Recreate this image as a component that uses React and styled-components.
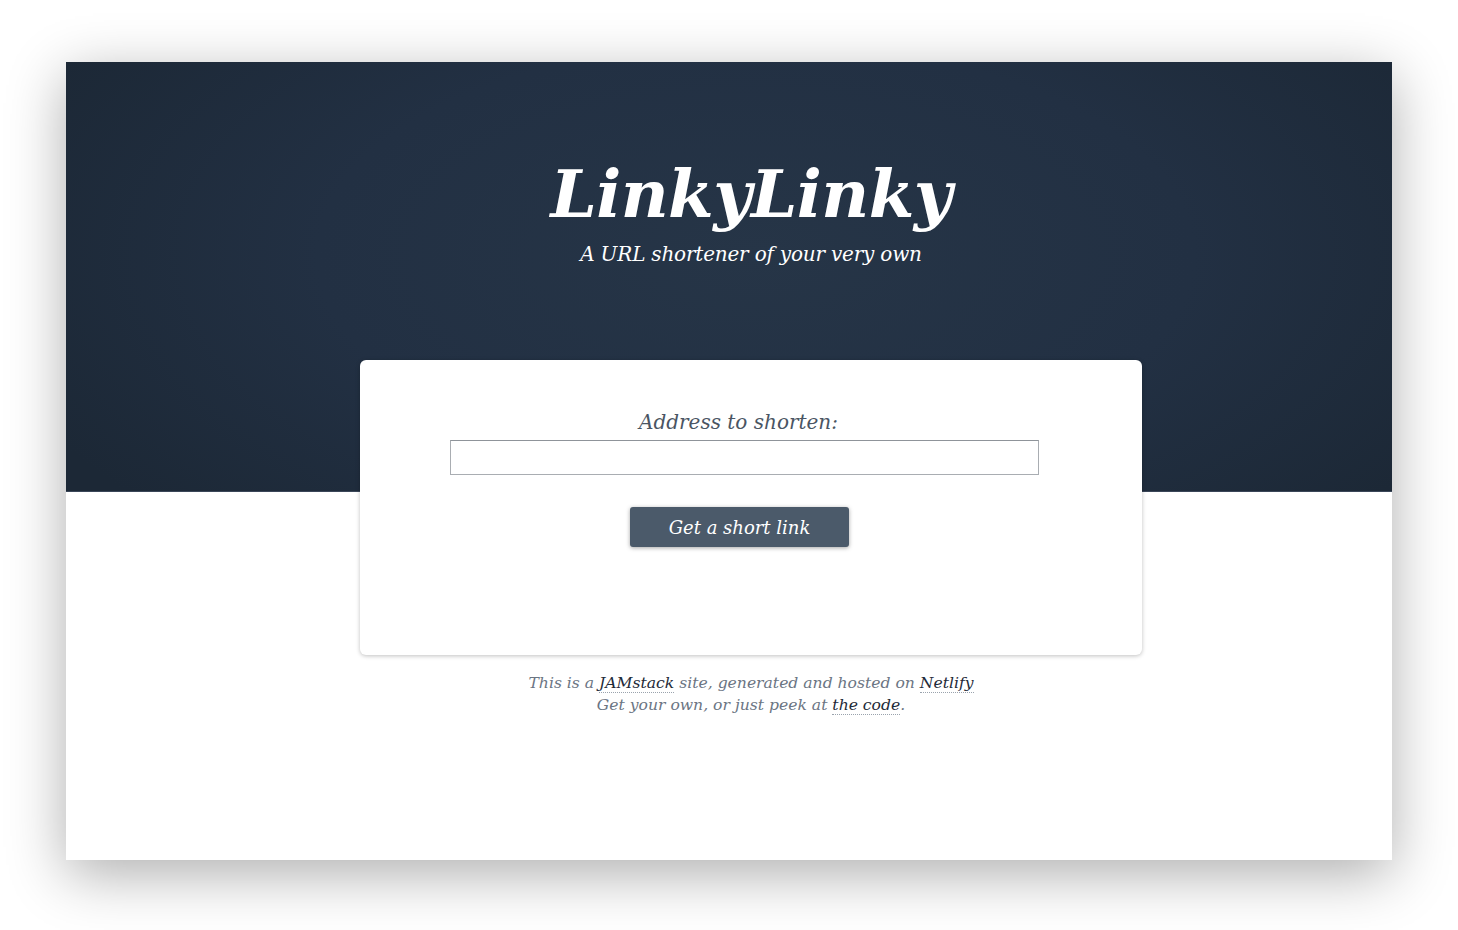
import React, {useState} from "react";
import styled, {createGlobalStyle} from 'styled-components';

const GlobalStyle = createGlobalStyle`
  html, body {
    margin: 0;
    padding: 0;
    background: #ffffff;
  }
  body {
    font-family: "DejaVu Serif", Georgia, serif;
  }
`;

const StyledPage = styled.div`
  width: 1458px;
  height: 930px;
  padding: 62px 66px 70px 66px;
  box-sizing: border-box;
  background: #ffffff;
`;

const StyledWindow = styled.div`
  width: 1326px;
  height: 798px;
  background: #ffffff;
  box-shadow: 0 14px 55px rgba(0, 0, 0, 0.32);
  overflow: hidden;
`;

const StyledHeader = styled.header`
  height: 430px;
  box-sizing: border-box;
  padding-top: 92px;
  padding-left: 294px;
  background: radial-gradient(ellipse 60% 90% at 52% 45%, #263547 0%, #223043 55%, #1c2836 100%);
  border-bottom: 1px solid #3a4658;
`;

const StyledColumn = styled.div`
  width: 782px;
  display: flex;
  flex-direction: column;
  align-items: center;
`;

const StyledTitle = styled.h1`
  margin: 0;
  font-family: "DejaVu Serif", Georgia, serif;
  font-style: italic;
  font-weight: bold;
  font-size: 66px;
  line-height: 80px;
  letter-spacing: -0.6px;
  color: #ffffff;
`;

const StyledSubtitle = styled.p`
  margin: 5px 0 0 0;
  font-family: "DejaVu Serif", Georgia, serif;
  font-style: italic;
  font-size: 20px;
  line-height: 30px;
  letter-spacing: -0.2px;
  color: #ffffff;
`;

const StyledMain = styled.main`
  margin-top: -132px;
  padding-left: 294px;
`;

const StyledCard = styled.form`
  width: 782px;
  height: 295px;
  box-sizing: border-box;
  padding: 45px 103px 0 90px;
  background: #ffffff;
  border-radius: 6px;
  box-shadow: 0 1px 4px rgba(0, 0, 0, 0.25);
  display: flex;
  flex-direction: column;
  align-items: center;
`;

const StyledLabel = styled.label`
  font-family: "DejaVu Serif", Georgia, serif;
  font-style: italic;
  font-size: 20px;
  line-height: 35px;
  color: #4a5563;
  margin-right: 12px;
`;

const StyledInput = styled.input`
  width: 100%;
  height: 35px;
  box-sizing: border-box;
  border: 1px solid #a9adb2;
  border-top-color: #8f949a;
  border-radius: 0;
  padding: 4px 8px;
  font-size: 16px;
  outline: none;
`;

const StyledButton = styled.button`
  margin-top: 32px;
  margin-right: 10px;
  width: 219px;
  height: 40px;
  border: none;
  border-radius: 3px;
  background: #4b5a6a;
  color: #ffffff;
  font-family: "DejaVu Serif", Georgia, serif;
  font-style: italic;
  font-size: 18px;
  box-shadow: 0 1px 4px rgba(0, 0, 0, 0.35);
  cursor: pointer;
`;

const StyledFooter = styled.footer`
  width: 782px;
  margin-top: 17px;
  text-align: center;
  font-family: "DejaVu Serif", Georgia, serif;
  font-style: italic;
  font-size: 15.6px;
  line-height: 22px;
  color: #6b7583;
`;

const StyledLink = styled.a`
  color: #1e2a38;
  text-decoration: none;
  border-bottom: 1px dotted #9aa3ad;
`;

const App = () => {
    const [url, setUrl] = useState('');

    return (
        <>
            <GlobalStyle/>
            <StyledPage>
                <StyledWindow>
                    <StyledHeader>
                        <StyledColumn>
                            <StyledTitle>LinkyLinky</StyledTitle>
                            <StyledSubtitle>A URL shortener of your very own</StyledSubtitle>
                        </StyledColumn>
                    </StyledHeader>
                    <StyledMain>
                        <StyledCard onSubmit={e => e.preventDefault()}>
                            <StyledLabel htmlFor="url">Address to shorten:</StyledLabel>
                            <StyledInput id="url" value={url} onChange={e => setUrl(e.target.value)}/>
                            <StyledButton type="submit">Get a short link</StyledButton>
                        </StyledCard>
                        <StyledFooter>
                            This is a <StyledLink href="#">JAMstack</StyledLink> site, generated and hosted on <StyledLink href="#">Netlify</StyledLink>
                            <br/>
                            Get your own, or just peek at <StyledLink href="#">the code</StyledLink>.
                        </StyledFooter>
                    </StyledMain>
                </StyledWindow>
            </StyledPage>
        </>
    );
};

export default App;
